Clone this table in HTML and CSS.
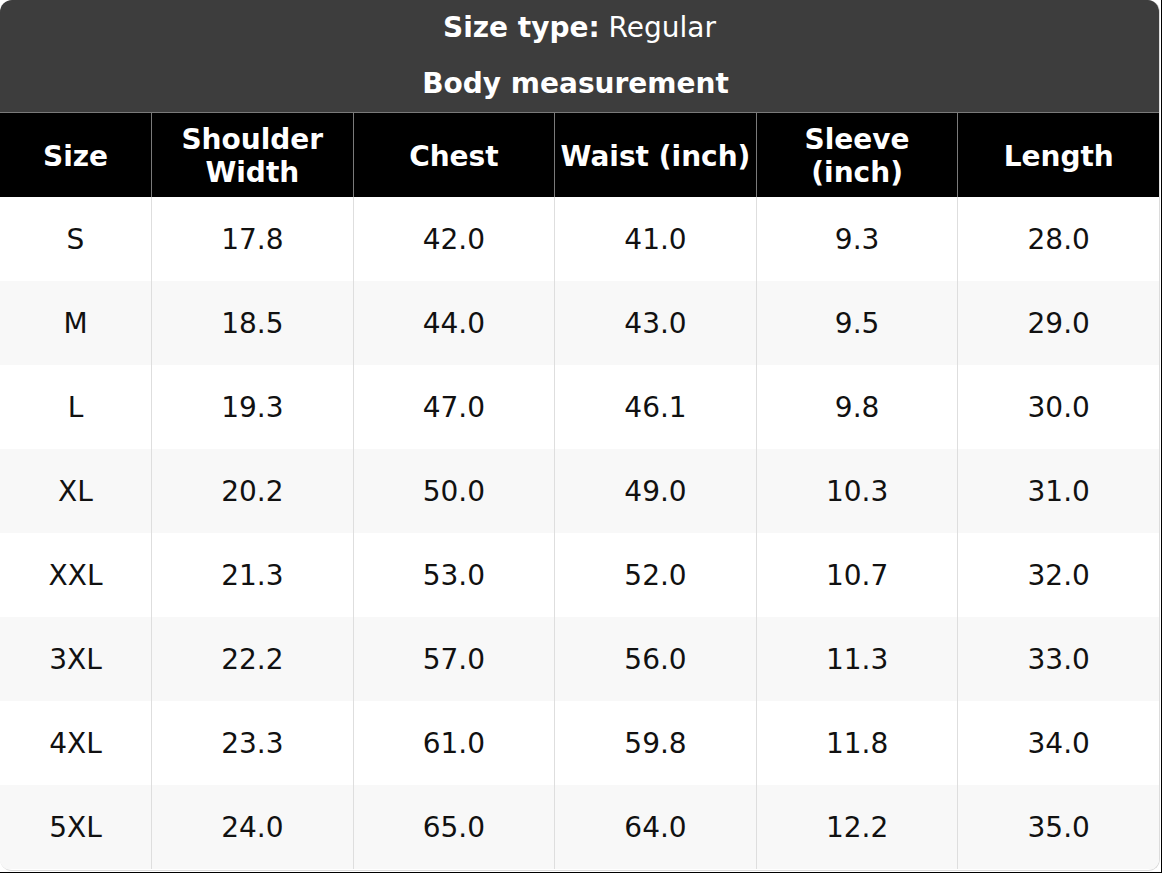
FILE: index.html
```html
<!DOCTYPE html>
<html lang="en">
<head>
<meta charset="utf-8">
<title>Size chart</title>
<link rel="stylesheet" href="styles.css">
</head>
<body>
<div class="page">
  <div class="card">
    <div class="caption">
      <div class="size-type"><b>Size type:</b> Regular</div>
      <div class="body-title">Body measurement</div>
    </div>
    <div class="grid">
      <div class="cell th">Size</div>
      <div class="cell th">Shoulder Width</div>
      <div class="cell th">Chest</div>
      <div class="cell th">Waist (inch)</div>
      <div class="cell th">Sleeve (inch)</div>
      <div class="cell th">Length</div>

      <div class="cell">S</div><div class="cell">17.8</div><div class="cell">42.0</div><div class="cell">41.0</div><div class="cell">9.3</div><div class="cell">28.0</div>
      <div class="cell alt">M</div><div class="cell alt">18.5</div><div class="cell alt">44.0</div><div class="cell alt">43.0</div><div class="cell alt">9.5</div><div class="cell alt">29.0</div>
      <div class="cell">L</div><div class="cell">19.3</div><div class="cell">47.0</div><div class="cell">46.1</div><div class="cell">9.8</div><div class="cell">30.0</div>
      <div class="cell alt">XL</div><div class="cell alt">20.2</div><div class="cell alt">50.0</div><div class="cell alt">49.0</div><div class="cell alt">10.3</div><div class="cell alt">31.0</div>
      <div class="cell">XXL</div><div class="cell">21.3</div><div class="cell">53.0</div><div class="cell">52.0</div><div class="cell">10.7</div><div class="cell">32.0</div>
      <div class="cell alt">3XL</div><div class="cell alt">22.2</div><div class="cell alt">57.0</div><div class="cell alt">56.0</div><div class="cell alt">11.3</div><div class="cell alt">33.0</div>
      <div class="cell">4XL</div><div class="cell">23.3</div><div class="cell">61.0</div><div class="cell">59.8</div><div class="cell">11.8</div><div class="cell">34.0</div>
      <div class="cell alt">5XL</div><div class="cell alt">24.0</div><div class="cell alt">65.0</div><div class="cell alt">64.0</div><div class="cell alt">12.2</div><div class="cell alt">35.0</div>
    </div>
  </div>
</div>
</body>
</html>
```

FILE: styles.css
```css
html {
  background: #000;
}
body {
  margin: 0;
  font-family: "DejaVu Sans", sans-serif;
}
.page {
  width: 1161px;
  height: 872px;
  background: #fff;
  overflow: hidden;
}
.card {
  width: 1160px;
  height: 871px;
  box-sizing: border-box;
  border: 1px solid #dcdcdc;
  border-top: 0;
  border-left: 0;
  border-radius: 12px;
  overflow: hidden;
}
.caption {
  background: #3d3d3d;
  color: #fff;
  text-align: center;
  font-size: 28px;
  height: 113px;
  border-bottom: 1px solid #7a7a7a;
  box-sizing: border-box;
}
.size-type {
  height: 55px;
  line-height: 55px;
}
.size-type b {
  font-weight: bold;
}
.body-title {
  font-weight: bold;
  height: 57px;
  line-height: 57px;
  padding-right: 8px;
}
.grid {
  display: grid;
  grid-template-columns: 151px repeat(5, 1fr);
  grid-auto-rows: 84px;
}
.cell {
  display: flex;
  align-items: center;
  justify-content: center;
  text-align: center;
  font-size: 28px;
  color: #111;
  background: #fff;
  border-left: 1px solid #dedede;
  padding: 0 4px;
}
.cell:nth-child(6n+1) {
  border-left: 0;
}
.cell.alt {
  background: #f8f8f8;
}
.cell.th {
  background: #000;
  color: #fff;
  font-weight: bold;
  line-height: 33px;
  padding-top: 2px;
  border-left-color: #7a7a7a;
}
```
